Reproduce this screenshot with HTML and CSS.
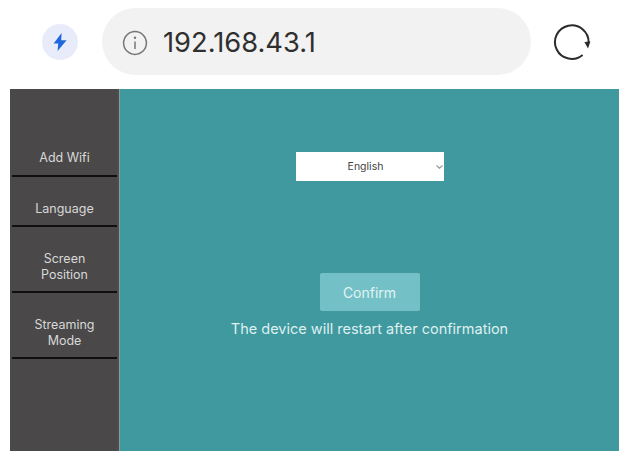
FILE: index.html
```html
<!DOCTYPE html>
<html lang="en">
<head>
<meta charset="utf-8">
<title>Device settings</title>
<link rel="stylesheet" href="styles.css">
</head>
<body>
<header class="browser-bar">
  <span class="boost">
    <svg width="14" height="18" viewBox="0 0 14 18" aria-hidden="true"><path class="bolt" d="M8.6 0 .6 10.4h4.6L4.6 18 13.6 7.2H8.2z"/></svg>
  </span>
  <div class="address">
    <svg class="info" width="26" height="26" viewBox="0 0 26 26" aria-hidden="true">
      <circle class="line-grey" cx="13" cy="13" r="11.4"/>
      <path class="line-grey" d="M13 11.4v7.6"/>
      <circle class="dot-grey" cx="13" cy="7.8" r="1.2"/>
    </svg>
    <span class="url">192.168.43.1</span>
  </div>
  <svg class="reload" width="38" height="38" viewBox="0 0 38 38" aria-hidden="true">
    <path class="line-dark" d="M29.6 32A16.8 16.8 0 1 1 35.6 19.6"/>
    <path class="fill-dark" d="M31.4 19 37.4 18.4 35 25.6z"/>
  </svg>
</header>
<div class="panel">
  <nav class="sidebar">
    <a class="nav-item nav-first">Add Wifi</a>
    <a class="nav-item">Language</a>
    <a class="nav-item">Screen<br>Position</a>
    <a class="nav-item">Streaming<br>Mode</a>
  </nav>
  <main class="content">
    <div class="select-wrap">
      <select class="lang">
        <option>English</option>
      </select>
      <svg class="chevron" width="7" height="4" viewBox="0 0 7 4" aria-hidden="true"><path class="chevron-line" d="M.5.5 3.5 3.2 6.5.5"/></svg>
    </div>
    <button class="confirm" type="button">Confirm</button>
    <p class="note">The device will restart after confirmation</p>
  </main>
</div>
</body>
</html>
```
FILE: styles.css
```css
* { box-sizing: border-box; }
html, body { height: 100%; }
body {
  margin: 0;
  background: #fff;
  font-family: Inter, "Noto Sans", sans-serif;
  overflow: hidden;
}
.browser-bar {
  height: 89px;
  display: flex;
  align-items: center;
  padding: 0 37px 6px 42px;
}
.boost {
  width: 36px;
  height: 36px;
  border-radius: 50%;
  background: #e8ecfa;
  display: flex;
  align-items: center;
  justify-content: center;
  flex: none;
}
.bolt { fill: #2068dc; }
.address {
  margin-left: 24px;
  width: 429px;
  height: 67px;
  border-radius: 34px;
  background: #f2f2f2;
  display: flex;
  align-items: center;
  padding: 2px 0 0 20px;
  flex: none;
}
.info { flex: none; }
.line-grey { fill: none; stroke: #777; stroke-width: 1.5; }
.dot-grey { fill: #777; }
.url {
  margin-left: 15px;
  font-size: 27.3px;
  color: #2f2f2f;
}
.reload { margin-left: 22px; flex: none; }
.line-dark { fill: none; stroke: #2b2b2b; stroke-width: 2; }
.fill-dark { fill: #2b2b2b; }
.panel {
  margin: 0 8px 0 10px;
  height: 362px;
  display: flex;
}
.sidebar {
  width: 109px;
  flex: none;
  background: #4a4848;
  border-right: 2px solid #574949;
  padding: 0 0 0 2px;
  display: flex;
  flex-direction: column;
}
.nav-item {
  display: block;
  padding: 24px 0 9px;
  border-bottom: 2px solid #0f0f0f;
  text-align: center;
  color: #d8d8d8;
  font-size: 12.5px;
  line-height: 15.5px;
}
.nav-first { padding-top: 61px; }
.content {
  flex: 1;
  background: #3f999f;
  border-left: 1px solid #6fa6a0;
  display: flex;
  flex-direction: column;
  align-items: center;
  padding-top: 63px;
}
.select-wrap {
  position: relative;
  width: 148px;
  height: 29px;
}
.lang {
  display: block;
  width: 100%;
  height: 100%;
  padding: 0 8px 1px 0;
  border: 0;
  border-radius: 0;
  appearance: none;
  background: #fff;
  color: #444;
  font-family: inherit;
  font-size: 10.5px;
  text-align: center;
  text-align-last: center;
}
.chevron {
  position: absolute;
  right: 1px;
  top: 13px;
}
.chevron-line { fill: none; stroke: #999; stroke-width: 1.2; }
.confirm {
  margin-top: 92px;
  width: 100px;
  height: 38px;
  padding: 0;
  border: 0;
  border-radius: 2px;
  background: #73c1c7;
  color: #e2f3f3;
  font-family: inherit;
  font-size: 14px;
}
.note {
  margin: 8px 0 0;
  color: #dff0f0;
  font-size: 14.5px;
  line-height: 20px;
}
```
